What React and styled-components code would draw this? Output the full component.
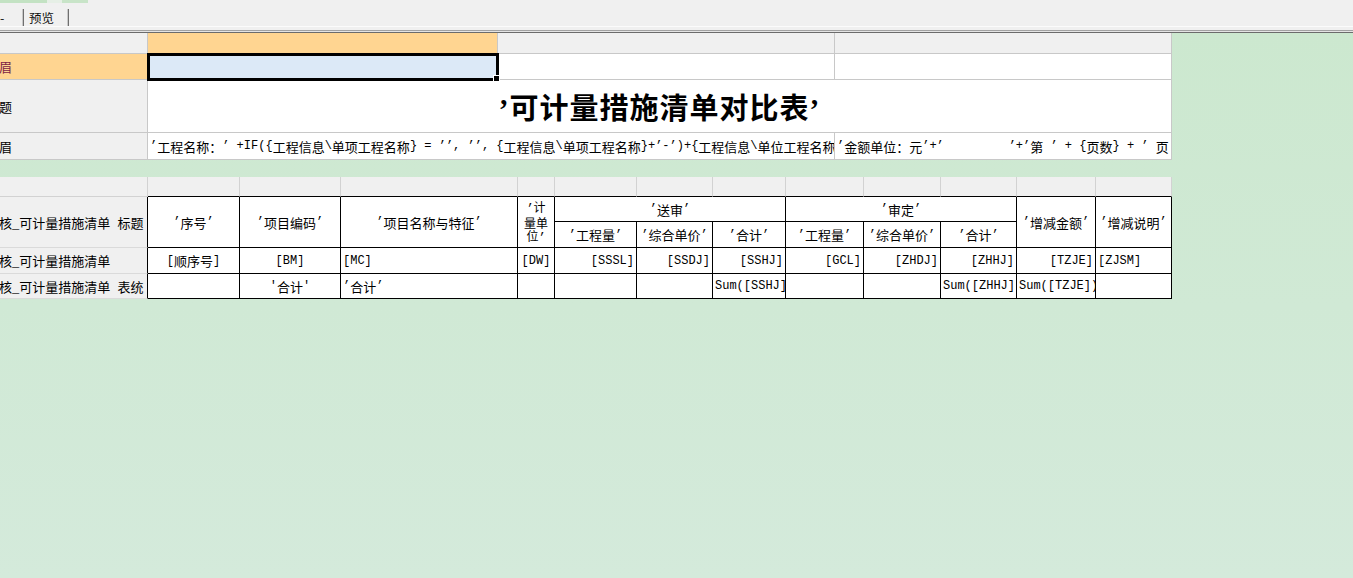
import React from 'react';
import styled, { createGlobalStyle } from 'styled-components';

const GlobalStyle = createGlobalStyle`
  html, body {
    margin: 0;
    padding: 0;
  }
  body {
    width: 1353px;
    height: 578px;
    overflow: hidden;
    background: #f0f0f0;
    font-family: "Noto Sans CJK SC", sans-serif;
    font-size: 13px;
    color: #000;
  }
`;

const Window = styled.div`
  display: flex;
  flex-direction: column;
  height: 578px;
`;

const TopStrip = styled.div`
  display: flex;
  flex-shrink: 0;
  height: 3px;
`;

const StripPiece = styled.div`
  flex-shrink: 0;
  width: ${p => p.$w}px;
  background: ${p => p.$c};
`;

const TabBar = styled.div`
  display: flex;
  flex-shrink: 0;
  align-items: flex-end;
  height: 23px;
  border-bottom: 1px solid #fbfbfb;
`;

const Tab = styled.div`
  box-sizing: border-box;
  display: flex;
  align-items: center;
  height: 17px;
  width: ${p => p.$w}px;
  padding-left: ${p => p.$pad || 0}px;
  border-right: 1px solid #6f6f6f;
  box-shadow: inset -1px 0 0 #c8c8c8;
  font-size: 12.5px;
  color: #111;
`;

const Rule = styled.div`
  box-sizing: border-box;
  flex-shrink: 0;
  height: 3px;
  margin-top: 3px;
  background: #e4e4e4;
  border-top: 1px solid #a2a2a2;
  border-bottom: 1px solid #6b6b6b;
`;

const Sheet = styled.div`
  flex: 1;
  display: flex;
  flex-direction: column;
  gap: 17px;
  background: linear-gradient(#cce8cf, #d4eadb);
`;

const Grid = styled.div`
  display: grid;
  width: 1172px;
  grid-template-columns: ${p => p.$cols};
  grid-template-rows: ${p => p.$rows};
`;

const Cell = styled.div`
  box-sizing: border-box;
  position: relative;
  display: flex;
  align-items: center;
  justify-content: ${p =>
    p.$align === 'left' ? 'flex-start' : p.$align === 'right' ? 'flex-end' : 'center'};
  padding: 0 2px;
  min-width: 0;
  overflow: hidden;
  white-space: pre;
  background: ${p => p.$bg || '#fff'};
  color: ${p => p.$color || '#000'};
  border-right: 1px solid ${p => p.$right || '#c8c8c8'};
  border-bottom: 1px solid ${p => p.$bottom || '#c8c8c8'};
  grid-column: ${p => (p.$cols ? `span ${p.$cols}` : 'auto')};
  grid-row: ${p => (p.$rows ? `span ${p.$rows}` : 'auto')};
`;

const Selected = styled(Cell)`
  overflow: visible;
  background: #dce9f7;
  outline: 3px solid #000;
  outline-offset: -2px;
  z-index: 1;
`;

const FillHandle = styled.span`
  position: absolute;
  right: -3px;
  bottom: -3px;
  width: 5px;
  height: 5px;
  background: #000;
  border: 1px solid #fff;
`;

const Latin = styled.span`
  font-family: "Liberation Mono", monospace;
  font-size: 12px;
`;

const LabelText = styled.span`
  margin-left: -16px;
`;

const Title = styled.span`
  font-family: "Liberation Serif", "Noto Sans CJK SC", serif;
  font-size: 29px;
  font-weight: 700;
  letter-spacing: 1px;
`;

const Stacked = styled.span`
  display: flex;
  flex-direction: column;
  align-items: center;
  align-self: flex-start;
  padding-top: 3px;
  white-space: nowrap;
  font-size: 12px;
  line-height: 13px;
`;

const GRAY = '#f0f0f0';
const ORANGE = '#ffd591';
const LIGHT = '#d2d2d2';
const DARK = '#000';

const topCols = '148px 350px 337px 337px';
const topRows = '21px 26px 53px 27px';
const listCols = '148px 92px 101px 177px 37px 82px 76px 73px 78px 77px 76px 79px 76px';
const listRows = '20px 25px 26px 26px 25px';

// ascii runs and quote marks go in the monospace face, the rest stays in the CJK face
const runs = text =>
  typeof text === 'string'
    ? text.split(/([\x20-\x7e’]+)/).map((s, i) => (i % 2 ? <Latin key={i}>{s}</Latin> : s))
    : text;

const Label = ({ children, rows }) => (
  <Cell $bg={GRAY} $right={DARK} $bottom="#dadada" $align="left" $rows={rows}>
    <LabelText>{runs(children)}</LabelText>
  </Cell>
);

const Data = ({ children, align }) => (
  <Cell $right={DARK} $bottom={DARK} $align={align}>
    {runs(children)}
  </Cell>
);

const Head = ({ children, rows, cols }) => (
  <Cell $right={DARK} $bottom={DARK} $rows={rows} $cols={cols}>
    {runs(children)}
  </Cell>
);

const formula =
  '’工程名称：’ +IF({工程信息\\单项工程名称} = ’’, ’’, {工程信息\\单项工程名称}+’-’)+{工程信息\\单位工程名称}';
const money = '’金额单位：元’+’         ’+’第 ’ + {页数} + ’ 页';

export default function App() {
  return (
    <Window>
      <GlobalStyle />
      <TopStrip>
        <StripPiece $w={47} $c="#c3e2c3" />
        <StripPiece $w={15} $c="#e6efe6" />
        <StripPiece $w={26} $c="#c8e4c8" />
      </TopStrip>
      <TabBar>
        <Tab $w={24}>-</Tab>
        <Tab $w={45} $pad={5}>预览</Tab>
      </TabBar>
      <Rule />
      <Sheet>
        <Grid $cols={topCols} $rows={topRows}>
          <Cell $bg={GRAY} />
          <Cell $bg={ORANGE} />
          <Cell $bg={GRAY} />
          <Cell $bg={GRAY} />

          <Cell $bg={ORANGE} $color="#7b1d45" $align="left">
            <LabelText>页眉</LabelText>
          </Cell>
          <Selected>
            <FillHandle />
          </Selected>
          <Cell />
          <Cell />

          <Cell $bg={GRAY} $align="left">
            <LabelText>标题</LabelText>
          </Cell>
          <Cell $cols={3}>
            <Title>’可计量措施清单对比表’</Title>
          </Cell>

          <Cell $bg={GRAY} $align="left">
            <LabelText>页眉</LabelText>
          </Cell>
          <Cell $cols={2} $align="left">
            {runs(formula)}
          </Cell>
          <Cell $align="left">{runs(money)}</Cell>
        </Grid>

        <Grid $cols={listCols} $rows={listRows}>
          <Cell $bg={GRAY} $right={LIGHT} $bottom={LIGHT} />
          {Array.from({ length: 12 }, (_, i) => (
            <Cell key={i} $bg={GRAY} $right={LIGHT} $bottom={DARK} />
          ))}

          <Label rows={2}>审核_可计量措施清单 标题</Label>
          <Head rows={2}>’序号’</Head>
          <Head rows={2}>’项目编码’</Head>
          <Head rows={2}>’项目名称与特征’</Head>
          <Head rows={2}>
            <Stacked>
              <span>{runs('’计')}</span>
              <span>量单</span>
              <span>{runs('位’')}</span>
            </Stacked>
          </Head>
          <Head cols={3}>’送审’</Head>
          <Head cols={3}>’审定’</Head>
          <Head rows={2}>’增减金额’</Head>
          <Head rows={2}>’增减说明’</Head>
          <Head>’工程量’</Head>
          <Head>’综合单价’</Head>
          <Head>’合计’</Head>
          <Head>’工程量’</Head>
          <Head>’综合单价’</Head>
          <Head>’合计’</Head>

          <Label>审核_可计量措施清单</Label>
          <Data>[顺序号]</Data>
          <Data>[BM]</Data>
          <Data align="left">[MC]</Data>
          <Data>[DW]</Data>
          <Data align="right">[SSSL]</Data>
          <Data align="right">[SSDJ]</Data>
          <Data align="right">[SSHJ]</Data>
          <Data align="right">[GCL]</Data>
          <Data align="right">[ZHDJ]</Data>
          <Data align="right">[ZHHJ]</Data>
          <Data align="right">[TZJE]</Data>
          <Data align="left">[ZJSM]</Data>

          <Label>审核_可计量措施清单 表统</Label>
          <Data />
          <Data>'合计'</Data>
          <Data align="left">’合计’</Data>
          <Data />
          <Data />
          <Data />
          <Data align="left">Sum([SSHJ])</Data>
          <Data />
          <Data />
          <Data align="left">Sum([ZHHJ])</Data>
          <Data align="left">Sum([TZJE])</Data>
          <Data />
        </Grid>
      </Sheet>
    </Window>
  );
}
